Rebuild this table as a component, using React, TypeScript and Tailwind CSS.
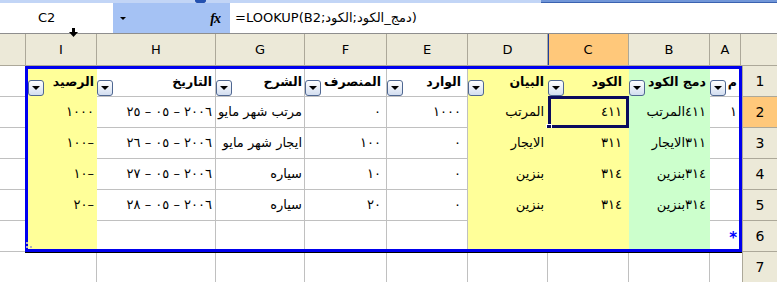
import React from "react";

type Fill = "white" | "yellow" | "green";

interface Col {
  key: string;
  width: string;
  fill: Fill;
  pad: string;
  label: string;
}

// list columns, left to right as drawn (sheet is right-to-left)
const cols: Col[] = [
  { key: "I", width: "w-[69px]", fill: "yellow", pad: "pr-[2px]", label: "الرصيد" },
  { key: "H", width: "w-[119px]", fill: "white", pad: "pr-[3px]", label: "التاريخ" },
  { key: "G", width: "w-[89px]", fill: "white", pad: "pr-[2px]", label: "الشرح" },
  { key: "F", width: "w-[82px]", fill: "white", pad: "pr-[5px]", label: "المنصرف" },
  { key: "E", width: "w-[81px]", fill: "white", pad: "pr-[6px]", label: "الوارد" },
  { key: "D", width: "w-[80px]", fill: "yellow", pad: "pr-[3px]", label: "البيان" },
  { key: "C", width: "w-[81px]", fill: "yellow", pad: "pr-[6px]", label: "الكود" },
  { key: "B", width: "w-[81px]", fill: "green", pad: "pr-[3px]", label: "دمج الكود" },
  { key: "A", width: "w-[29px]", fill: "white", pad: "pr-[2px]", label: "م" },
];

// t = arabic text, n = numeric part (drawn left to right as written)
type Val = { n?: string; t?: string };

const rows: Record<string, Val>[] = [
  {
    I: { n: "١٠٠٠" }, H: { n: "٢٥ – ٠٥ – ٢٠٠٦" }, G: { t: "مرتب شهر مايو" }, F: { n: "٠" },
    E: { n: "١٠٠٠" }, D: { t: "المرتب" }, C: { n: "٤١١" }, B: { t: "المرتب", n: "٤١١" }, A: { n: "١" },
  },
  {
    I: { n: "١٠٠–" }, H: { n: "٢٦ – ٠٥ – ٢٠٠٦" }, G: { t: "ايجار شهر مايو" }, F: { n: "١٠٠" },
    E: { n: "٠" }, D: { t: "الايجار" }, C: { n: "٣١١" }, B: { t: "الايجار", n: "٣١١" }, A: {},
  },
  {
    I: { n: "١٠–" }, H: { n: "٢٧ – ٠٥ – ٢٠٠٦" }, G: { t: "سياره" }, F: { n: "١٠" },
    E: { n: "٠" }, D: { t: "بنزين" }, C: { n: "٣١٤" }, B: { t: "بنزين", n: "٣١٤" }, A: {},
  },
  {
    I: { n: "٢٠–" }, H: { n: "٢٨ – ٠٥ – ٢٠٠٦" }, G: { t: "سياره" }, F: { n: "٢٠" },
    E: { n: "٠" }, D: { t: "بنزين" }, C: { n: "٣١٤" }, B: { t: "بنزين", n: "٣١٤" }, A: {},
  },
];

const fillClass: Record<Fill, string> = {
  white: "bg-white border-[#c0c0c0]",
  yellow: "bg-[#ffff99] border-transparent",
  green: "bg-[#ccffcc] border-transparent",
};

const headerCols = [
  { w: "w-[26px]", label: "" },
  { w: "w-[71px]", label: "I" },
  { w: "w-[119px]", label: "H" },
  { w: "w-[89px]", label: "G" },
  { w: "w-[82px]", label: "F" },
  { w: "w-[81px]", label: "E" },
  { w: "w-[80px]", label: "D" },
  { w: "w-[81px]", label: "C" },
  { w: "w-[81px]", label: "B" },
  { w: "w-[31px]", label: "A" },
  { w: "w-[36px]", label: "" },
];

const row7Widths = [
  "w-[72px]", "w-[119px]", "w-[89px]", "w-[82px]", "w-[81px]",
  "w-[80px]", "w-[81px]", "w-[81px]", "w-[32px]",
];

const CellText = ({ v }: { v: Val }) => (
  <div className="flex items-center whitespace-nowrap">
    {v.t && <span dir="rtl">{v.t}</span>}
    {v.n && <bdo dir="ltr">{v.n}</bdo>}
  </div>
);

const FilterButton = () => (
  <div className="w-[16px] h-[16px] shrink-0 rounded-[3px] border border-[#4f6791] bg-linear-to-b from-white to-[#d3def0] flex items-center justify-center">
    <div className="w-0 h-0 border-l-[4px] border-r-[4px] border-t-[4px] border-l-transparent border-r-transparent border-t-black" />
  </div>
);

const TopStrip = () => (
  <div className="flex h-[3px]">
    <div className="w-[195px] bg-[#c2d5f6]" />
    <div className="w-[11px] bg-[#2451b0] rounded-b-[2px]" />
    <div className="w-[335px] bg-[#c2d5f6]" />
    <div className="flex-1 bg-[#7196d8] border-b border-[#3a62b0]" />
  </div>
);

const FormulaBar = () => (
  <div className="flex h-[31px] border-b border-[#8e8e8e] text-[13px]">
    <div className="w-[113px] bg-white flex items-center pl-[38px]">C2</div>
    <div className="w-[117px] bg-[#a5c2f4] flex items-center justify-between pl-[7px] pr-[10px]">
      <div className="w-0 h-0 border-l-[3px] border-r-[3px] border-t-[3px] border-l-transparent border-r-transparent border-t-black" />
      <span className="font-['Liberation_Serif',serif] italic font-bold text-[14px] tracking-[-1px]">fx</span>
    </div>
    <div className="flex-1 bg-white flex items-center pl-[5px] whitespace-nowrap">
      <span dir="ltr">=LOOKUP(B2;دمج_الكود;الكود)</span>
    </div>
  </div>
);

const ColumnHeaders = () => (
  <div className="flex h-[32px] bg-[#ece9d8] border-b border-[#aca899] text-[13px]">
    {headerCols.map((c, i) => (
      <div
        key={i}
        className={`${c.w} h-full flex items-center justify-center ${
          c.label === "C"
            ? "bg-[#ffc87a] border-r border-[#aca899] shadow-[inset_1px_0_0_#1f3fa0]"
            : i === headerCols.length - 1
            ? ""
            : "border-r border-[#aca899]"
        }`}
      >
        {c.label}
      </div>
    ))}
  </div>
);

const ListBox = () => (
  <div className="h-[186px] border-[3px] border-[#0000ee] flex flex-col relative shadow-[0_1px_0_#000] text-[13px]">
    {/* header row with autofilter buttons */}
    <div className="flex h-[28px]">
      {cols.map((c, i) => (
        <div
          key={c.key}
          className={`${c.width} ${fillClass[c.fill]} ${i === cols.length - 1 ? "" : "border-r"} border-b flex justify-between ${c.pad}`}
        >
          <div className="self-end">
            <FilterButton />
          </div>
          <span dir="rtl" className="font-bold whitespace-nowrap pt-[4px] text-[12.5px]">{c.label}</span>
        </div>
      ))}
    </div>

    {rows.map((r, ri) => (
      <div key={ri} className="flex h-[31px]">
        {cols.map((c, i) => (
          <div
            key={c.key}
            className={`${c.width} ${fillClass[c.fill]} ${i === cols.length - 1 ? "" : "border-r"} border-b flex items-center justify-end relative ${c.pad}`}
          >
            <CellText v={r[c.key]} />
            {ri === 0 && c.key === "C" && (
              <>
                <div className="absolute left-0 -top-[1px] -right-[1px] -bottom-[1px] border-[3px] border-[#0b0b5e]" />
                <div className="absolute -left-[2px] -bottom-[3px] w-[6px] h-[6px] bg-[#0b0b5e] border border-white" />
              </>
            )}
          </div>
        ))}
      </div>
    ))}

    {/* insert row */}
    <div className="flex h-[28px]">
      {cols.map((c, i) => (
        <div
          key={c.key}
          className={`${c.width} ${fillClass[c.fill]} ${i === cols.length - 1 ? "" : "border-r"} flex items-center justify-end ${c.pad}`}
        >
          {c.key === "A" && <span className="text-[#0000ff] text-[15px] font-bold pt-[6px]">*</span>}
        </div>
      ))}
    </div>

    {/* resize corner */}
    <svg className="absolute -left-[2px] bottom-0" width="7" height="7" viewBox="0 0 7 7">
      <rect x="0" y="0" width="2" height="2" fill="#b4b4b4" />
      <rect x="0" y="4" width="2" height="2" fill="#b4b4b4" />
      <rect x="4" y="4" width="2" height="2" fill="#b4b4b4" />
    </svg>
  </div>
);

const Row7 = () => (
  <div className="flex h-[30px]">
    {row7Widths.map((w, i) => (
      <div key={i} className={`${w} ${i === row7Widths.length - 1 ? "" : "border-r border-[#c0c0c0]"}`} />
    ))}
  </div>
);

const RowHeaders = () => (
  <div className="w-[35px] flex flex-col text-[14px]">
    {["1", "2", "3", "4", "5", "6", "7"].map((n, i) => (
      <div
        key={n}
        className={`${i === 6 ? "h-[30px]" : "h-[31px] border-b"} border-l border-[#aca899] flex items-center justify-center ${
          n === "2" ? "bg-[#ffc87a]" : "bg-[#ece9d8]"
        }`}
      >
        {n}
      </div>
    ))}
  </div>
);

export default function App() {
  return (
    <div className="w-[777px] h-[282px] overflow-hidden bg-white relative font-['DejaVu_Sans',sans-serif] text-black select-none">
      <TopStrip />
      <FormulaBar />
      <ColumnHeaders />
      <div className="flex h-[216px]">
        {/* column J, partly visible */}
        <div className="w-[25px] flex flex-col">
          {[0, 1, 2, 3, 4, 5, 6].map((i) => (
            <div key={i} className={i === 6 ? "h-[30px]" : "h-[31px] border-b border-[#c0c0c0]"} />
          ))}
        </div>
        <div className="w-[717px] flex flex-col">
          <ListBox />
          <Row7 />
        </div>
        <RowHeaders />
      </div>

      {/* column-select pointer */}
      <svg className="absolute left-[69px] top-[28px]" width="9" height="9" viewBox="0 0 9 9">
        <rect x="3" y="0" width="3" height="5" fill="#000" />
        <polygon points="0,4 9,4 4.5,9" fill="#000" />
      </svg>
    </div>
  );
}
